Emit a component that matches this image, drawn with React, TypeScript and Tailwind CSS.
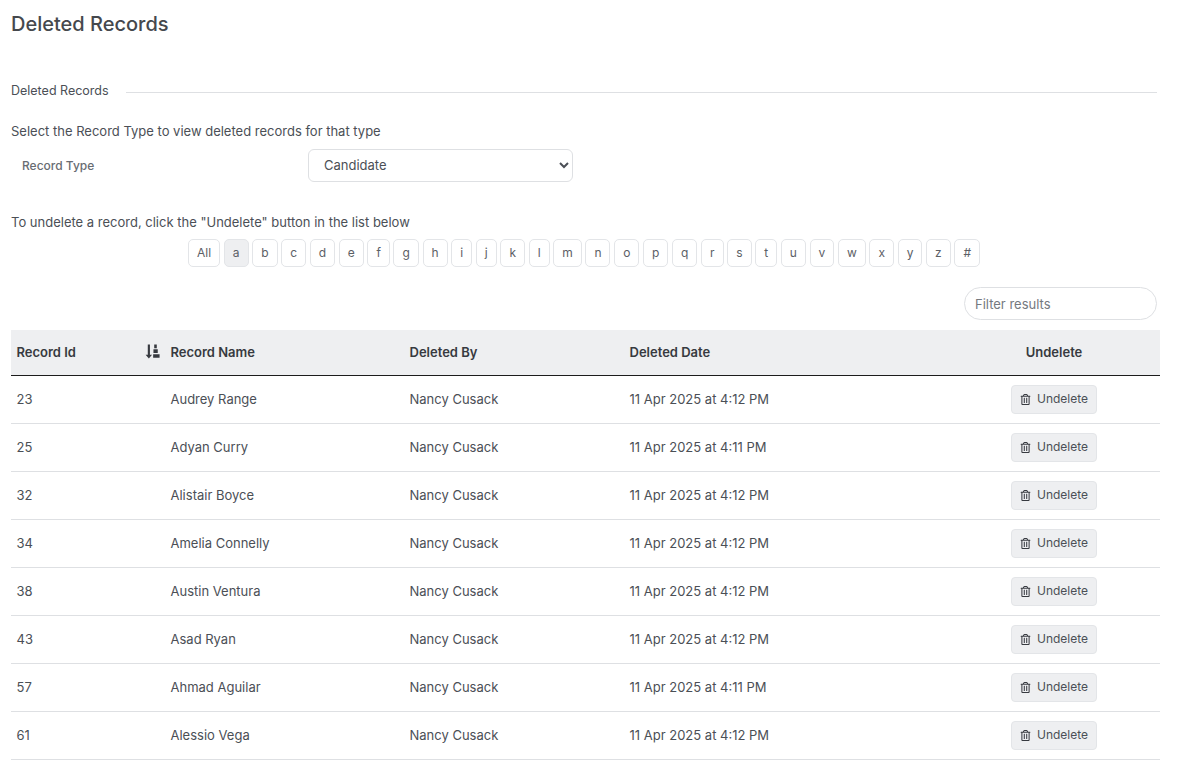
import { FaRegTrashAlt } from 'react-icons/fa';

const letters = ['All', 'a', 'b', 'c', 'd', 'e', 'f', 'g', 'h', 'i', 'j', 'k', 'l', 'm', 'n', 'o', 'p', 'q', 'r', 's', 't', 'u', 'v', 'w', 'x', 'y', 'z', '#'];

const records = [
  { id: 23, name: 'Audrey Range', date: '11 Apr 2025 at 4:12 PM' },
  { id: 25, name: 'Adyan Curry', date: '11 Apr 2025 at 4:11 PM' },
  { id: 32, name: 'Alistair Boyce', date: '11 Apr 2025 at 4:12 PM' },
  { id: 34, name: 'Amelia Connelly', date: '11 Apr 2025 at 4:12 PM' },
  { id: 38, name: 'Austin Ventura', date: '11 Apr 2025 at 4:12 PM' },
  { id: 43, name: 'Asad Ryan', date: '11 Apr 2025 at 4:12 PM' },
  { id: 57, name: 'Ahmad Aguilar', date: '11 Apr 2025 at 4:11 PM' },
  { id: 61, name: 'Alessio Vega', date: '11 Apr 2025 at 4:12 PM' },
];

function SortIcon() {
  return (
    <svg className="absolute right-[5px] top-[14px] h-[15px] w-[15px] text-[#373a40]" viewBox="0 0 14 14" fill="currentColor">
      <path d="M2.6 0.5h2v9.5h2L3.6 13.5 0.6 10h2z" />
      <path d="M8.6 0.5h2.4v3.4H8.6zM7.9 5h4v3.4h-4zM7.6 9.5h6v3.4h-6z" />
    </svg>
  );
}

function App() {
  return (
    <div className="h-[763px] overflow-hidden bg-white pl-[11px] pr-[22px] text-[13px] text-[#4b4f56] font-['Inter',sans-serif]">
      <h1 className="pt-[11px] text-[20px] leading-[26px] font-medium text-[#45484d]">Deleted Records</h1>

      <div className="mt-[46px] flex items-center pr-[3px]">
        <span className="text-[12.5px] leading-[16px]">Deleted Records</span>
        <div className="ml-[17px] mt-[3px] h-px flex-1 bg-[#dee0e3]"></div>
      </div>

      <p className="mt-[24px] leading-[16px]">Select the Record Type to view deleted records for that type</p>

      <div className="mt-[10px] flex items-center">
        <label className="w-[297px] pl-[11px] text-[12px] font-medium text-[#686c72]">Record Type</label>
        <select className="h-[33px] w-[265px] rounded-md border border-[#dee0e3] bg-white pb-[1px] pl-[11px] text-[13px] text-[#4b4f56]" defaultValue="Candidate">
          <option>Candidate</option>
        </select>
      </div>

      <p className="mt-[32px] leading-[16px]">To undelete a record, click the "Undelete" button in the list below</p>

      <div className="mt-[9px] flex justify-center gap-[3.67px] pr-[3px]">
        {letters.map((letter) => (
          <button
            key={letter}
            className={`h-[28px] rounded-[5px] border border-[#e3e5e8] px-[8px] text-[12px] text-[#5c6066] ${letter === 'a' ? 'bg-[#eeeff1]' : 'bg-white'}`}
          >
            {letter}
          </button>
        ))}
      </div>

      <div className="mt-[20px] flex justify-end pr-[3px]">
        <input
          className="h-[33px] w-[193px] rounded-full border border-[#dee0e3] px-[10px] text-[13px] placeholder:text-[#75797f] outline-none"
          placeholder="Filter results"
        />
      </div>

      <table className="mt-[10px] w-full table-fixed border-collapse">
        <colgroup>
          <col className="w-[154px]" />
          <col className="w-[239px]" />
          <col className="w-[220px]" />
          <col className="w-[324px]" />
          <col />
        </colgroup>
        <thead>
          <tr className="h-[45px] border-b border-[#1c1c1c] bg-[#eeeff1] text-left text-[13px] text-[#373a40]">
            <th className="relative px-[5.5px] font-semibold">
              Record Id
              <SortIcon />
            </th>
            <th className="px-[5.5px] font-semibold">Record Name</th>
            <th className="px-[5.5px] font-semibold">Deleted By</th>
            <th className="px-[5.5px] font-semibold">Deleted Date</th>
            <th className="px-[5.5px] text-center font-semibold">Undelete</th>
          </tr>
        </thead>
        <tbody>
          {records.map((record) => (
            <tr key={record.id} className="h-[48px] border-b border-[#dee0e3]">
              <td className="px-[5.5px] pt-[2px]">{record.id}</td>
              <td className="px-[5.5px] pt-[2px]">{record.name}</td>
              <td className="px-[5.5px] pt-[2px]">Nancy Cusack</td>
              <td className="px-[5.5px] pt-[2px]">{record.date}</td>
              <td className="px-[5.5px] text-center">
                <button className="inline-flex h-[29px] w-[86px] items-center justify-center gap-[6px] rounded-[4px] border border-[#e3e5e8] bg-[#eeeff1] text-[12px] text-[#4b4f56]">
                  <FaRegTrashAlt className="text-[11px] text-[#373a40]" />
                  Undelete
                </button>
              </td>
            </tr>
          ))}
        </tbody>
      </table>
    </div>
  );
}

export default App;
